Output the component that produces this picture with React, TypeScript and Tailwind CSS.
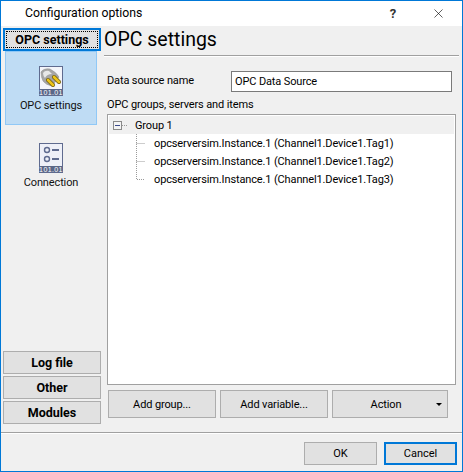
import { X } from "lucide-react";

const font = "font-['Roboto',Arial,sans-serif]";

function SideButton({ label, active }: { label: string; active?: boolean }) {
  return (
    <button
      type="button"
      className={
        active
          ? "relative w-[98px] h-[23px] ml-px pt-[2px] border-2 border-[#0078d7] bg-[#e1e1e1] text-[12.5px] font-bold text-black flex items-center justify-center"
          : "w-[98px] h-[23px] ml-px pt-[2px] border border-[#adadad] bg-[#e1e1e1] text-[12.5px] font-bold text-black flex items-center justify-center"
      }
    >
      {active && <span className="absolute inset-px border border-dotted border-black" />}
      {label}
    </button>
  );
}

function PageIcon({ plug }: { plug?: boolean }) {
  return (
    <svg width="24" height="30" viewBox="0 0 24 30" className="block">
      <rect x="0.5" y="0.5" width="23" height="29" fill={plug ? "#f4f5fa" : "#eef0f8"} stroke="#5f6b8f" />
      <rect x="1" y="23" width="22" height="6" fill="#5b6788" />
      <text x="12" y="28.8" fontSize="7" fill="#fff" textAnchor="middle" fontFamily="Liberation Sans" letterSpacing="0.4">
        101.01
      </text>
      {plug ? (
        <>
          <path d="M2 6 Q5 2 11 3 Q17 6 20 11 L13 20 Q7 19 4 15 Q2 11 2 6 Z" fill="#a6a6a6" stroke="#8a8a8a" strokeWidth="0.5" />
          <path d="M4 7 Q6 4 10 5 L13 8 Q8 8 6 12 Q4 10 4 7 Z" fill="#e8e8e8" />
          <path d="M9 14 L14 19" stroke="#6b5a10" strokeWidth="4" strokeLinecap="round" />
          <path d="M15 11 L20 16" stroke="#6b5a10" strokeWidth="4" strokeLinecap="round" />
          <path d="M9 14 L14 19" stroke="#eec418" strokeWidth="2.6" strokeLinecap="round" />
          <path d="M15 11 L20 16" stroke="#eec418" strokeWidth="2.6" strokeLinecap="round" />
        </>
      ) : (
        <>
          <circle cx="8" cy="7" r="2.5" fill="none" stroke="#5f6b8f" strokeWidth="1.4" />
          <rect x="13" y="6" width="7" height="2" fill="#5f6b8f" />
          <circle cx="8" cy="16" r="2.5" fill="none" stroke="#5f6b8f" strokeWidth="1.4" />
          <rect x="13" y="15" width="7" height="2" fill="#5f6b8f" />
        </>
      )}
    </svg>
  );
}

function TreeItem({ label, last }: { label: string; last?: boolean }) {
  return (
    <div className="flex items-center h-[18px] text-[11px] tracking-[-0.13px] text-black">
      <svg width="45" height="18" className="block shrink-0">
        <path
          d={last ? "M27.5 0V9.5H36" : "M27.5 0V18M27.5 9.5H36"}
          stroke="#9a9a9a"
          strokeDasharray="1 1"
          fill="none"
        />
      </svg>
      <span className="pt-[2px]">{label}</span>
    </div>
  );
}

function Btn({ label, className }: { label: string; className: string }) {
  return (
    <button
      type="button"
      className={"h-[28px] pt-[2px] border border-[#adadad] bg-[#e1e1e1] text-[11px] tracking-[-0.13px] text-black flex items-center justify-center " + className}
    >
      {label}
    </button>
  );
}

export default function App() {
  return (
    <div className={"w-[463px] h-[472px] border border-[#0078d7] bg-[#f0f0f0] flex flex-col overflow-hidden " + font}>
      {/* title bar */}
      <div className="h-[25px] shrink-0 bg-white flex items-center text-[12.25px] text-black">
        <span className="ml-[24px] flex-1">Configuration options</span>
        <span className="w-[12px] text-center text-[13px] font-bold text-[#333] mr-[32px]">?</span>
        <X size={15} strokeWidth={1} className="mr-[16px]" />
      </div>

      <div className="flex-1 flex min-h-0">
        {/* left column */}
        <div className="w-[100px] shrink-0 pl-px pt-[2px] pb-[8px] flex flex-col">
          <SideButton label="OPC settings" active />
          <div className="w-[92px] h-[74px] ml-[3px] bg-[#bfdcf4] border border-[#90c8f6] flex flex-col items-center pt-[14px] gap-[2px] text-[11px] tracking-[-0.13px] text-[#111]">
            <PageIcon plug />
            <span>OPC settings</span>
          </div>
          <div className="w-[92px] ml-[3px] mt-[18px] flex flex-col items-center gap-[2px] text-[11px] tracking-[-0.13px] text-[#111]">
            <PageIcon />
            <span>Connection</span>
          </div>
          <div className="mt-auto flex flex-col gap-[2px]">
            <SideButton label="Log file" />
            <SideButton label="Other" />
            <SideButton label="Modules" />
          </div>
        </div>

        {/* main panel */}
        <div className="flex-1 min-w-0 pl-[3px] pr-[3px] flex flex-col">
          <div className="h-[31px] border-b border-b-white">
            <div className="h-[30px] border-b border-b-[#a0a0a0] text-[19.5px] leading-[28px] text-black">OPC settings</div>
          </div>
          <div className="flex items-center mt-[14px] pl-[3px] text-[11px] tracking-[-0.13px] text-black">
            <span className="w-[124px]">Data source name</span>
            <div className="w-[221px] h-[21px] border border-[#7a7a7a] bg-white pl-[3px] leading-[19px]">OPC Data Source</div>
          </div>
          <div className="mt-[6px] pl-[3px] text-[11px] tracking-[-0.13px] leading-[14px] text-black">OPC groups, servers and items</div>
          <div className="mt-[2px] ml-[3px] w-[349px] h-[271px] border border-[#a0a0a0] bg-white p-px">
            <div className="h-[18px] bg-[#f0f0f0] flex items-center text-[11px] tracking-[-0.13px] text-black">
              <svg width="26" height="18" className="block shrink-0">
                <rect x="4.5" y="5.5" width="8" height="8" fill="#f4f4f4" stroke="#8a8a8a" />
                <path d="M6 9.5H11" stroke="#3b4a8c" />
                <path d="M13 9.5H19" stroke="#9a9a9a" strokeDasharray="1 1" />
              </svg>
              <span className="pt-[2px]">Group 1</span>
            </div>
            <TreeItem label="opcserversim.Instance.1 (Channel1.Device1.Tag1)" />
            <TreeItem label="opcserversim.Instance.1 (Channel1.Device1.Tag2)" />
            <TreeItem label="opcserversim.Instance.1 (Channel1.Device1.Tag3)" last />
          </div>
          <div className="mt-[5px] ml-[4px] flex gap-[4px]">
            <Btn label="Add group..." className="w-[108px]" />
            <Btn label="Add variable..." className="w-[108px]" />
            <button
              type="button"
              className="w-[116px] h-[28px] pt-[2px] pr-[8px] border border-[#adadad] bg-[#e1e1e1] text-[11px] tracking-[-0.13px] text-black relative flex items-center justify-center"
            >
              Action
              <span className="absolute right-[5px] top-[12px] w-0 h-0 border-x-[3px] border-x-transparent border-t-[3px] border-t-black" />
            </button>
          </div>
        </div>
      </div>

      {/* footer */}
      <div className="h-[39px] shrink-0 border-t border-t-[#a0a0a0]">
        <div className="h-full border-t border-t-white flex justify-end gap-[7px] pt-[8px] pr-[5px] text-[11px] text-black">
          <button type="button" className="w-[73px] h-[23px] pt-[2px] border border-[#adadad] bg-[#e1e1e1]">OK</button>
          <button type="button" className="w-[73px] h-[23px] pt-[2px] border-2 border-[#0078d7] bg-[#e1e1e1]">Cancel</button>
        </div>
      </div>
    </div>
  );
}
